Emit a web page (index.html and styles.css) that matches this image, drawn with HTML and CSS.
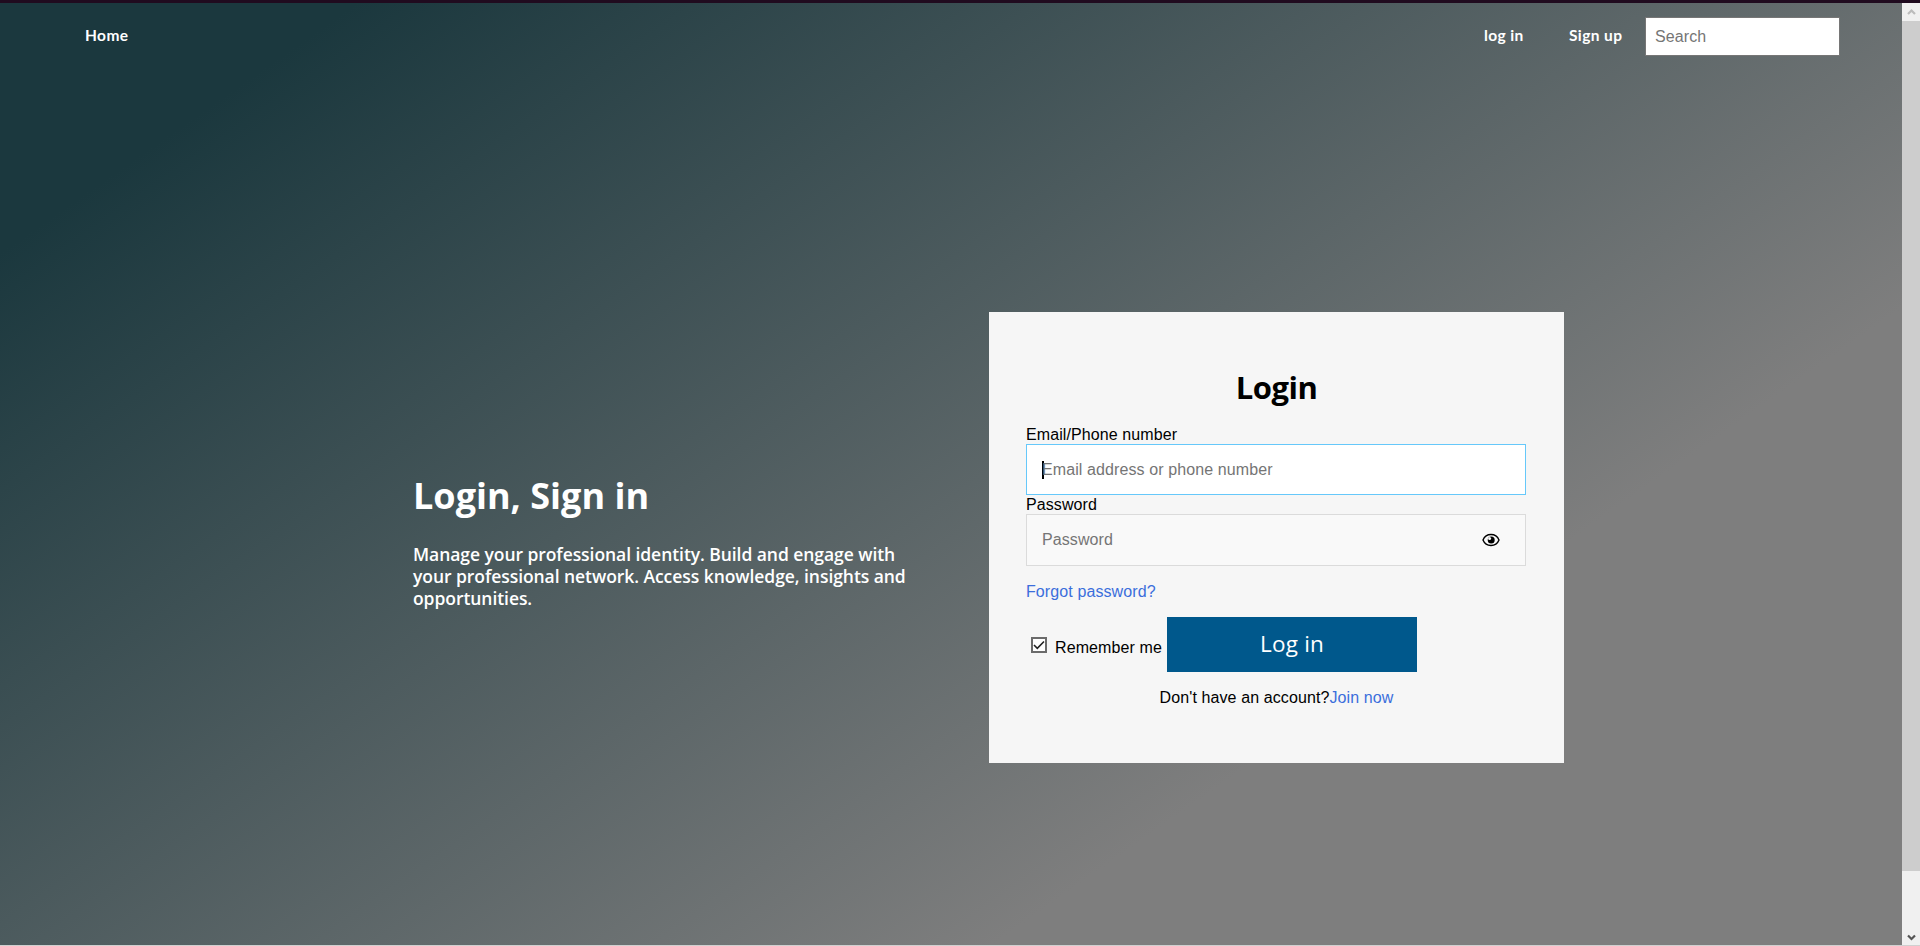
FILE: index.html
```html
<!DOCTYPE html>
<html lang="en">
<head>
<meta charset="utf-8">
<title>Login</title>
<link rel="stylesheet" href="styles.css">
</head>
<body>
<div class="window">
  <div class="page">
    <nav class="nav">
      <a class="nav-link home">Home</a>
      <a class="nav-link login">log in</a>
      <a class="nav-link signup">Sign up</a>
      <div class="search">Search</div>
    </nav>
    <main class="main">
      <section class="intro">
        <h1>Login, Sign in</h1>
        <p>Manage your professional identity. Build and engage with<br>your professional network. Access knowledge, insights and<br>opportunities.</p>
      </section>
      <section class="card">
        <h2>Login</h2>
        <label>Email/Phone number</label>
        <div class="field focused"><i class="caret"></i>Email address or phone number</div>
        <label class="pw">Password</label>
        <div class="field password">Password
          <svg class="eye" width="18" height="14" viewBox="0 0 18 14"><path d="M1 7C4 -.3 14 -.3 17 7C14 14.300 4 14.300 1 7Z" fill="none" stroke="#000" stroke-width="1.400"/><circle cx="9.200" cy="7" r="3.500"/><circle cx="7.600" cy="5.400" r="1.500" fill="#f9f9f9"/></svg>
        </div>
        <a class="link forgot">Forgot password?</a>
        <div class="actions">
          <svg class="check" width="16" height="16" viewBox="0 0 16 16"><rect x="1" y="1" width="14" height="14" fill="#fff" stroke="#6b6b6b" stroke-width="2"/><path d="M3 8L6.300 11.300L13 4.500" fill="none" stroke="#222" stroke-width="1.600"/></svg>
          <span class="remember">Remember me</span>
          <div class="button">Log in</div>
        </div>
        <p class="join">Don't have an account?<a class="link">Join now</a></p>
      </section>
    </main>
  </div>
  <div class="scrollbar">
    <svg class="arrow" width="18" height="18" viewBox="0 0 18 18"><path d="M6 11L9.500 7.500L13 11" fill="none" stroke="#bcbcbc" stroke-width="2.200"/></svg>
    <div class="thumb"></div>
    <svg class="arrow" width="18" height="18" viewBox="0 0 18 18"><path d="M6 8.500L9.500 12L13 8.500" fill="none" stroke="#555" stroke-width="2.200"/></svg>
  </div>
</div>
</body>
</html>
```
FILE: styles.css
```css
* { box-sizing: border-box; }
body { margin: 0; height: 946px; overflow: hidden; font: 16px/18px "Liberation Sans", Arial, sans-serif; letter-spacing: .1px; color: #000; }
h1, h2, p { margin: 0; }
.window { display: flex; height: 946px; border-top: 3px solid #200b1f; border-bottom: 1px solid #d0d0d0; }
.page { width: 1902px; height: 942px; background: linear-gradient(145deg, #1b383e 11%, #7e7e7e 72%); }
.nav { display: flex; height: 66px; padding: 14px 62px 0 85px; align-items: flex-start; }
.nav-link { font: 700 15.5px/36px Lato, "Open Sans", sans-serif; letter-spacing: .4px; color: #fff; white-space: nowrap; }
.home { width: 1399px; }
.login { width: 85px; }
.signup { width: 76px; }
.search { width: 195px; height: 39px; padding: 10px 9px; background: #fff; border: 1px solid #767676; color: #757575; }
.main { display: flex; align-items: flex-start; padding: 243px 0 0 413px; }
.intro { width: 576px; padding-top: 159px; color: #fff; white-space: nowrap; }
h1 { font: 700 36px/50px "Open Sans", sans-serif; letter-spacing: 0; }
.intro p { margin-top: 22px; font: 600 17.5px/22px "Open Sans", sans-serif; letter-spacing: -.06px; }
.card { width: 575px; height: 451px; padding: 50px 37px 0; background: #f6f6f6; }
h2 { margin-bottom: 11px; font: 700 31px/50px "Open Sans", sans-serif; letter-spacing: -.5px; text-align: center; }
label { display: block; height: 21px; line-height: 24px; }
.pw { height: 19px; line-height: 20px; }
.field { display: flex; align-items: center; width: 500px; height: 51px; padding: 0 15px; background: #fff; border: 1px solid #66c8fa; color: #757575; }
.caret { width: 2px; height: 18px; margin-right: -2px; background: #000; }
.password { height: 52px; padding-right: 25px; background: #f9f9f9; border-color: #dbdbdb; justify-content: space-between; }
.link { color: #3b6edc; }
.forgot { display: block; margin-top: 17px; }
.actions { display: flex; align-items: flex-start; margin-top: 16px; padding-left: 5px; }
.check { margin: 20px 8px 0 0; }
.remember { width: 112px; padding-top: 22px; }
.button { width: 250px; height: 55px; background: #00588c; color: #fff; font: 500 22.5px/54px "Open Sans", sans-serif; letter-spacing: .2px; text-align: center; }
.join { margin-top: 17px; text-align: center; }
.scrollbar { display: flex; flex-direction: column; width: 18px; background: #f0f0f0; }
.thumb { height: 850px; margin-bottom: auto; background: #cdcdcd; }
```
